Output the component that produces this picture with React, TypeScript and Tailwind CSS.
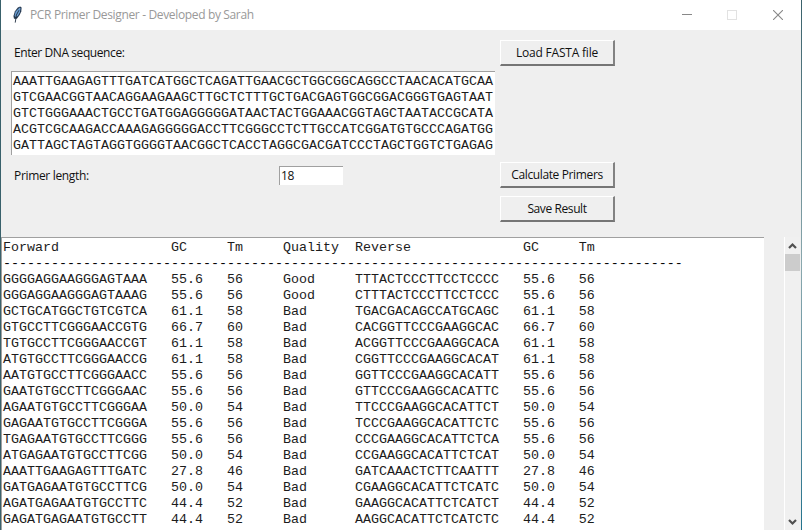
import React from "react";

const sequence = [
  "AAATTGAAGAGTTTGATCATGGCTCAGATTGAACGCTGGCGGCAGGCCTAACACATGCAA",
  "GTCGAACGGTAACAGGAAGAAGCTTGCTCTTTGCTGACGAGTGGCGGACGGGTGAGTAAT",
  "GTCTGGGAAACTGCCTGATGGAGGGGGATAACTACTGGAAACGGTAGCTAATACCGCATA",
  "ACGTCGCAAGACCAAAGAGGGGGACCTTCGGGCCTCTTGCCATCGGATGTGCCCAGATGG",
  "GATTAGCTAGTAGGTGGGGTAACGGCTCACCTAGGCGACGATCCCTAGCTGGTCTGAGAG",
].join("\n");

type Primer = [forward: string, gc: string, tm: string, quality: string, reverse: string];

const primers: Primer[] = [
  ["GGGGAGGAAGGGAGTAAA", "55.6", "56", "Good", "TTTACTCCCTTCCTCCCC"],
  ["GGGAGGAAGGGAGTAAAG", "55.6", "56", "Good", "CTTTACTCCCTTCCTCCC"],
  ["GCTGCATGGCTGTCGTCA", "61.1", "58", "Bad", "TGACGACAGCCATGCAGC"],
  ["GTGCCTTCGGGAACCGTG", "66.7", "60", "Bad", "CACGGTTCCCGAAGGCAC"],
  ["TGTGCCTTCGGGAACCGT", "61.1", "58", "Bad", "ACGGTTCCCGAAGGCACA"],
  ["ATGTGCCTTCGGGAACCG", "61.1", "58", "Bad", "CGGTTCCCGAAGGCACAT"],
  ["AATGTGCCTTCGGGAACC", "55.6", "56", "Bad", "GGTTCCCGAAGGCACATT"],
  ["GAATGTGCCTTCGGGAAC", "55.6", "56", "Bad", "GTTCCCGAAGGCACATTC"],
  ["AGAATGTGCCTTCGGGAA", "50.0", "54", "Bad", "TTCCCGAAGGCACATTCT"],
  ["GAGAATGTGCCTTCGGGA", "55.6", "56", "Bad", "TCCCGAAGGCACATTCTC"],
  ["TGAGAATGTGCCTTCGGG", "55.6", "56", "Bad", "CCCGAAGGCACATTCTCA"],
  ["ATGAGAATGTGCCTTCGG", "50.0", "54", "Bad", "CCGAAGGCACATTCTCAT"],
  ["AAATTGAAGAGTTTGATC", "27.8", "46", "Bad", "GATCAAACTCTTCAATTT"],
  ["GATGAGAATGTGCCTTCG", "50.0", "54", "Bad", "CGAAGGCACATTCTCATC"],
  ["AGATGAGAATGTGCCTTC", "44.4", "52", "Bad", "GAAGGCACATTCTCATCT"],
  ["GAGATGAGAATGTGCCTT", "44.4", "52", "Bad", "AAGGCACATTCTCATCTC"],
];

const formatRow = (f: string, gc: string, tm: string, q: string, r: string) =>
  f.padEnd(21) + gc.padEnd(7) + tm.padEnd(7) + q.padEnd(9) + r.padEnd(21) + gc.padEnd(7) + tm;

const mono = "font-['Liberation_Mono',monospace] text-[13.33px] leading-[16px] text-[#1c1c1c] whitespace-pre";

function TkButton({ children }: { children: React.ReactNode }) {
  return (
    <button className="flex h-[26px] w-[115px] items-center justify-center border-t border-r-2 border-b-2 border-l border-t-white border-r-[#828282] border-b-[#757575] border-l-white bg-[#efefef] pt-px whitespace-nowrap">
      {children}
    </button>
  );
}

function TitleBar() {
  return (
    <header className="flex h-[30px] shrink-0 items-center bg-white pl-[9px] text-[#999999]">
      <svg width="16" height="20" viewBox="0 0 16 20" className="mr-[4px] shrink-0">
        <g transform="translate(0.2 0.5) scale(0.95)">
          <path d="M10.5 1 L12 2 L11.7 6 L10 10 L7 14 L4 14 L3.4 11 L5 6 L8 2 Z" fill="#25384f" />
          <path d="M10 2 L10.9 3 L10.2 7 L8.2 10.8 L5.6 12.4 L4.6 10.5 L5.8 6.2 Z" fill="#6c9dcf" />
          <path d="M9.2 5 L6.5 10 L5.3 18" fill="none" stroke="#142336" strokeWidth="0.9" />
        </g>
      </svg>
      <span className="grow tracking-[-0.35px] whitespace-nowrap">PCR Primer Designer - Developed by Sarah</span>
      <div className="flex items-center pr-[18px]">
        <svg width="10" height="10" shapeRendering="crispEdges" className="mr-[35px]">
          <path d="M0 4.5H10" stroke="#888" />
        </svg>
        <svg width="10" height="10" shapeRendering="crispEdges" className="mr-[36px]">
          <rect x=".5" y=".5" width="9" height="9" fill="none" stroke="#e2e2e2" />
        </svg>
        <svg width="10" height="10">
          <path d="M0 0L10 10M10 0L0 10" stroke="#888" strokeWidth="1.1" />
        </svg>
      </div>
    </header>
  );
}

export default function App() {
  return (
    <div className="flex h-[530px] w-[802px] overflow-hidden bg-[#efefef] font-['Open_Sans','Noto_Sans',sans-serif] text-[12px] leading-[16px] text-[#111]">
      <div className="w-px shrink-0 bg-[#39616b]" />
      <div className="flex w-[800px] shrink-0 flex-col">
        <TitleBar />
        <main className="flex h-[207px] shrink-0">
          <div className="w-[484px] shrink-0 pl-[10px]">
            <div className="h-[41px] pt-[15px] pl-[3px] tracking-[-0.42px]">Enter DNA sequence:</div>
            <div className={`h-[84px] w-[484px] border-t border-l border-[#a0a0a0] bg-white pt-[2px] pl-px ${mono}`}>
              {sequence}
            </div>
            <div className="flex pt-[11px]">
              <span className="w-[268px] pt-[2px] pl-[3px] tracking-[-0.33px]">Primer length:</span>
              <div className="h-[19px] w-[64px] border-t border-l border-[#a0a0a0] bg-white pt-px pl-px tracking-[-0.3px]">18</div>
            </div>
          </div>
          <div className="flex flex-col pt-[10px] pl-[15px]">
            <TkButton>
              <span className="tracking-[-0.2px]">Load FASTA file</span>
            </TkButton>
            <div className="flex flex-col gap-2 pt-[96px]">
              <TkButton>
                <span className="tracking-[-0.37px]">Calculate Primers</span>
              </TkButton>
              <TkButton>
                <span className="tracking-[-0.4px]">Save Result</span>
              </TkButton>
            </div>
          </div>
        </main>
        <section className="flex h-[293px]">
          <div className={`w-[763px] shrink-0 border-t border-l border-[#a0a0a0] bg-white pt-[2px] pl-px ${mono}`}>
            <div>{formatRow("Forward", "GC", "Tm", "Quality", "Reverse")}</div>
            <div className="text-black">{"-".repeat(85)}</div>
            {primers.map((p) => (
              <div key={p[0]}>{formatRow(...p)}</div>
            ))}
          </div>
          <div className="ml-[20px] flex w-[16px] flex-col items-center justify-between border-l border-white bg-[#f0f0f0]">
            <div className="flex w-full flex-col items-center">
              <svg width="9" height="17" viewBox="0 0 9 17">
                <path d="M1 11L4.5 7.5L8 11" fill="none" stroke="#505050" strokeWidth="2.2" />
              </svg>
              <div className="h-[17px] w-full bg-[#cccccc]" />
            </div>
            <svg width="9" height="17" viewBox="0 0 9 17">
              <path d="M1 7L4.5 10.5L8 7" fill="none" stroke="#505050" strokeWidth="2.2" />
            </svg>
          </div>
        </section>
      </div>
      <div className="w-px bg-linear-to-b from-[#39616b] via-[#8aa8ae] to-[#21738d]" />
    </div>
  );
}
